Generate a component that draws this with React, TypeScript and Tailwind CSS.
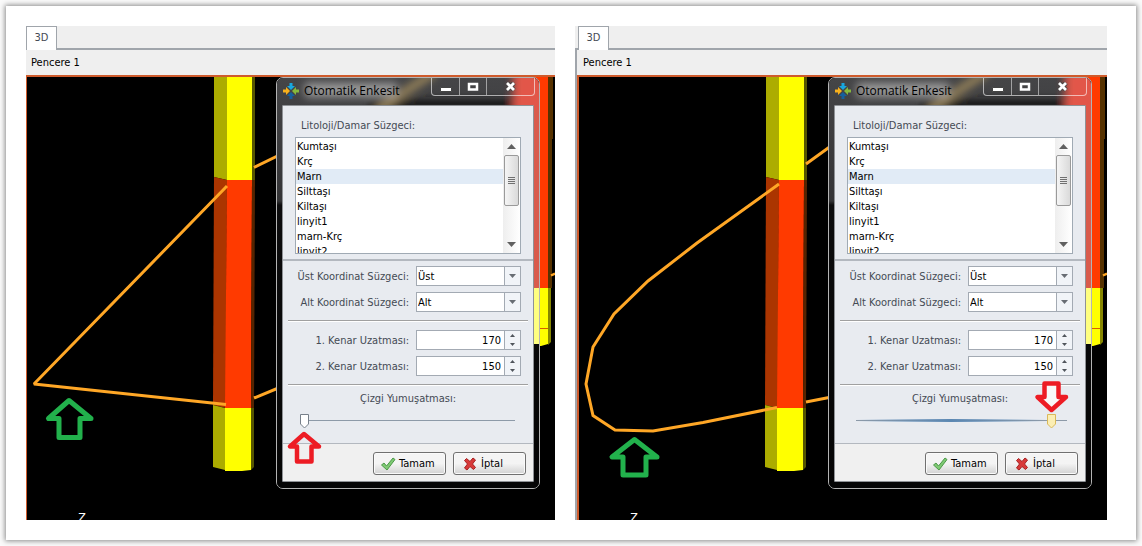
import { useId, useState } from "react";
import type { ReactNode } from "react";

const LITHOLOGIES = ["Kumtaşı", "Krç", "Marn", "Silttaşı", "Kiltaşı", "linyit1", "marn-Krç", "linyit2"];

type Variant = "sharp" | "smooth";

function Section({ variant }: { variant: Variant }) {
  return (
    <svg className="absolute top-0 left-0" width="529" height="443" viewBox="26 77 529 443" aria-hidden="true">
      {/* front borehole column */}
      <path d="M214 77h13v103l-13-3z" fill="#acac00" />
      <path d="M227 77h25v103h-25z" fill="#ffff00" />
      <path d="M252 77h3v103h-3z" fill="#565600" />
      <path d="M214 177l13 3-1 228-13-3z" fill="#ab3500" />
      <path d="M227 180h25l-1 228h-26z" fill="#ff3a00" />
      <path d="M252 180h3l-1 228h-3z" fill="#562400" />
      <path d="M213 405l12 3v62l-12-3z" fill="#acac00" />
      <path d="M225 408h26v62l-9 1h-17z" fill="#ffff00" />
      <path d="M251 408h3v59l-3 3z" fill="#565600" />
      {/* rear borehole column */}
      <path d="M510 77h38v211h-38z" fill="#ff3a00" />
      <path d="M548 77h5v62h-1v149h-4z" fill="#563200" />
      <path d="M510 288h38v56l-7 2h-31z" fill="#ffff00" />
      <path d="M548 288h3v54l-3 3z" fill="#868600" />
      <path d="M540 328.500h8" stroke="#d86000" />
      <path d="M551 275.500l4-2" stroke="#ffa726" strokeWidth="2.500" />
      <g fill="none" stroke="#ffa726" strokeWidth="3">
        {variant === "sharp" ? (
          <>
            <path d="M227 186L34 384L226 404.500" strokeLinejoin="bevel" />
            <path d="M254 167.500L300 145M254 398L300 379" />
          </>
        ) : (
          <>
            <path d="M227 184L145 243L96 281L62 314L41 347L34 384L41 415.500L63 430L101 431L151 422.500L225 407.500" />
            <path d="M254 164L290 138M254 402L300 393" />
          </>
        )}
      </g>
      {variant === "sharp" ? (
        <path d="M69 400.500L48.500 418.500H59V437.500H80V418.500H91Z" fill="none" stroke="#22b14c" strokeWidth="5" strokeLinejoin="round" />
      ) : (
        <path d="M82.500 439.500L60 457H71V475H94V457H105Z" fill="none" stroke="#22b14c" strokeWidth="5" strokeLinejoin="round" />
      )}
      <text x="78" y="522" fill="#ffffff" fontSize="13" fontFamily="Liberation Sans, sans-serif">Z</text>
    </svg>
  );
}

function AppMark() {
  return (
    <svg width="16" height="16" viewBox="0 0 16 16" aria-hidden="true">
      <path d="M6.500 0h3v3h2.500L8 7 4 3h2.500z" fill="#18a8e0" />
      <path d="M6.500 16h3v-3h2.500L8 9 4 13h2.500z" fill="#155f9e" />
      <path d="M0 6.500v3h3v2.500L7 8 3 4v2.500z" fill="#f8b01c" />
      <path d="M16 6.500v3h-3v2.500L9 8l4-4v2.500z" fill="#86b83c" />
    </svg>
  );
}

function Glass() {
  return (
    <svg className="absolute inset-0 h-full w-full" viewBox="0 0 262 410" preserveAspectRatio="none" aria-hidden="true">
      <defs>
        <filter id="soft" x="-20%" y="-20%" width="140%" height="140%">
          <feGaussianBlur stdDeviation="4" />
        </filter>
        <linearGradient id="frame" x1="0" y1="0" x2="0" y2="1">
          <stop offset="0" stopColor="#454547" />
          <stop offset="0.300" stopColor="#343436" />
          <stop offset="0.310" stopColor="#0c0c0d" />
          <stop offset="1" stopColor="#050505" />
        </linearGradient>
      </defs>
      <rect width="262" height="410" fill="url(#frame)" />
      <g filter="url(#soft)">
        <path d="M90 22h170v10H90z" fill="#131313" />
        <path d="M100 32L158-6" stroke="#a08a5c" strokeWidth="7" />
        <path d="M28 5h92v14H28z" fill="#9a9a9a" />
        <path d="M236-8h40v218h-40z" fill="#e2574a" />
        <path d="M255-8h20v218h-20z" fill="#e2574a" />
      </g>
      <path d="M254 32h8v178h-8z" fill="#d95b4c" />
      <path d="M254 210h8v56h-8z" fill="#ffff80" />
    </svg>
  );
}

function Row({ id, label, children }: { id: string; label: string; children: ReactNode }) {
  return (
    <div className="flex h-5 items-center gap-[7px]">
      <label htmlFor={id} className="flex-1 text-right whitespace-nowrap text-[#444a54]">
        {label}
      </label>
      <div className="flex h-5 w-[105px] border border-[#a3aab3] bg-white">{children}</div>
    </div>
  );
}

function Choice({ label, value }: { label: string; value: string }) {
  const id = useId();
  return (
    <Row id={id} label={label}>
      <div className="grid flex-1 grid-cols-[1fr_16px]">
        <select id={id} defaultValue={value} className="col-span-2 col-start-1 row-start-1 appearance-none bg-transparent pl-px text-black outline-none">
          <option>Üst</option>
          <option>Alt</option>
        </select>
        <span className="pointer-events-none col-start-2 row-start-1 flex items-center justify-center border-l border-[#a3aab3] bg-[#f1f4f8]">
          <svg width="7" height="4" viewBox="0 0 7 4" aria-hidden="true">
            <path d="M0 0h7L3.500 4z" fill="#686d74" />
          </svg>
        </span>
      </div>
    </Row>
  );
}

function Amount({ label, initial }: { label: string; initial: number }) {
  const id = useId();
  const [value, setValue] = useState(initial);
  return (
    <Row id={id} label={label}>
      <input
        id={id}
        inputMode="numeric"
        value={value}
        onChange={(e) => setValue(Number(e.target.value) || 0)}
        className="min-w-0 flex-1 bg-transparent pr-[3px] text-right text-black outline-none"
      />
      <span className="flex w-4 flex-col border-l border-[#a3aab3] bg-[#f1f4f8]">
        <button type="button" aria-label="+" onClick={() => setValue(value + 1)} className="flex flex-1 items-center justify-center">
          <svg width="5" height="3" viewBox="0 0 5 3" aria-hidden="true">
            <path d="M0 3h5L2.500 0z" fill="#50555c" />
          </svg>
        </button>
        <button type="button" aria-label="-" onClick={() => setValue(value - 1)} className="flex flex-1 items-center justify-center">
          <svg width="5" height="3" viewBox="0 0 5 3" aria-hidden="true">
            <path d="M0 0h5L2.500 3z" fill="#50555c" />
          </svg>
        </button>
      </span>
    </Row>
  );
}

function Divider() {
  return <div className="mx-[5px] my-2 h-[2px] border-t border-[#a0a0a0] bg-white" />;
}

function LithologyList({ labelId }: { labelId: string }) {
  const [selected, setSelected] = useState("Marn");
  return (
    <div className="mx-3 mt-1 flex h-[117px] border border-[#a0aab4] bg-white">
      <ul role="listbox" aria-labelledby={labelId} className="flex-1 overflow-hidden pt-px text-black">
        {LITHOLOGIES.map((name) => (
          <li
            key={name}
            role="option"
            aria-selected={name === selected}
            onClick={() => setSelected(name)}
            className="h-[15px] pl-px leading-[15px] aria-selected:bg-[#e1ebf6]"
          >
            {name}
          </li>
        ))}
      </ul>
      <div className="flex w-[17px] flex-col items-center bg-gradient-to-r from-[#eeeeee] to-white">
        <span className="flex h-[17px] items-center">
          <svg width="9" height="5" viewBox="0 0 9 5" aria-hidden="true">
            <path d="M0 5h9L4.500 0z" fill="#606060" />
          </svg>
        </span>
        <span className="flex h-[51px] w-[15px] flex-col items-center justify-center gap-px rounded-[2px] border border-[#9a9a9a] bg-gradient-to-r from-[#f5f5f5] to-[#dadada]">
          <i className="h-px w-[7px] bg-[#707070]" />
          <i className="h-px w-[7px] bg-[#707070]" />
          <i className="h-px w-[7px] bg-[#707070]" />
          <i className="h-px w-[7px] bg-[#707070]" />
        </span>
        <span className="mt-auto flex h-[17px] items-center">
          <svg width="9" height="5" viewBox="0 0 9 5" aria-hidden="true">
            <path d="M0 0h9L4.500 5z" fill="#606060" />
          </svg>
        </span>
      </div>
    </div>
  );
}

function Smoothing({ variant }: { variant: Variant }) {
  const id = useId();
  const smooth = variant === "smooth";
  const [value, setValue] = useState(smooth ? 93 : 0);
  return (
    <div className="-mt-[3px] flex flex-col gap-[7px] pb-[14px]">
      <label htmlFor={id} className="self-center text-[#444a54]">
        {"Çizgi Yumuşatması:"}
      </label>
      <div className="relative mr-[14px] ml-[17px] h-4 pt-[7px]">
        <div className="mx-[4px] h-px bg-[#8d9aa8]" />
        {smooth && (
          <div className="absolute top-[6px] left-[4px] h-[3px] w-[190px] bg-gradient-to-r from-transparent via-[#5b87b2] to-transparent" />
        )}
        <div className="absolute top-0 right-[9px] left-0 h-4">
          <svg className="absolute top-0" style={{ left: `${value}%` }} width="9" height="16" viewBox="0 0 9 16" aria-hidden="true">
            <path d="M.5 1.500h8v9.500L4.500 15 .5 11z" fill={smooth ? "#fbeeb4" : "#ffffff"} stroke={smooth ? "#d9b95a" : "#77808a"} />
          </svg>
        </div>
        <input
          id={id}
          type="range"
          min={0}
          max={100}
          value={value}
          onChange={(e) => setValue(Number(e.target.value))}
          className="absolute inset-0 h-4 w-full opacity-0"
        />
      </div>
    </div>
  );
}

function Marker({ variant }: { variant: Variant }) {
  return variant === "sharp" ? (
    <svg className="pointer-events-none absolute top-[350px] left-[9px]" width="37" height="37" viewBox="0 0 37 37" aria-hidden="true">
      <path d="M18 6L4 18.500H11V33.500H25.500V18.500H33Z" fill="none" stroke="#ed1c24" strokeWidth="4.500" strokeLinejoin="round" />
    </svg>
  ) : (
    <svg className="pointer-events-none absolute top-[302px] left-[205px]" width="35" height="34" viewBox="0 0 35 34" aria-hidden="true">
      <path d="M17.500 30L3.500 17H10.500V3.500H24.500V17H32Z" fill="#f8f8f8" stroke="#ed1c24" strokeWidth="4.500" strokeLinejoin="round" />
    </svg>
  );
}

const ACTION =
  "flex h-[23px] w-[73px] items-center gap-[3px] rounded-[3px] border border-[#707070] bg-gradient-to-b from-[#f4f4f4] from-50% to-[#d2d2d2] text-black shadow-[inset_0_0_0_1px_#fafafa]";

function Dialog({ variant }: { variant: Variant }) {
  const labelId = useId();
  return (
    <section
      role="dialog"
      aria-label="Otomatik Enkesit"
      className="absolute top-0 left-[250px] w-[264px] rounded-[7px] border border-[#b4b4b4] bg-black text-[11px] leading-[15px]"
    >
      <div className="absolute inset-0 overflow-hidden rounded-[6px]">
        <Glass />
      </div>
      <header className="relative flex h-[27px] items-start pl-[6px]">
        <div className="flex flex-1 items-center gap-[5px] pt-1">
          <AppMark />
          <h2 className="font-['Open_Sans',sans-serif] text-[12px] leading-[18px] text-black">
            Otomatik Enkesit
          </h2>
        </div>
        <div className="mr-1 flex h-[18px] rounded-b-[4px] border border-t-0 border-white/60 text-white">
          <button type="button" aria-label="Simge durumuna küçült" className="flex w-7 items-center justify-center border-r border-white/50">
            <svg width="12" height="12" viewBox="0 0 12 12" aria-hidden="true">
              <path d="M.5 6.500h11v4H.5z" fill="#fff" stroke="#444" />
            </svg>
          </button>
          <button type="button" aria-label="Ekranı kapla" className="flex w-[27px] items-center justify-center border-r border-white/50">
            <svg width="12" height="10" viewBox="0 0 12 10" aria-hidden="true">
              <path d="M2 2h8v5.500H2z" fill="none" stroke="#fff" strokeWidth="2.500" />
            </svg>
          </button>
          <button type="button" aria-label="Kapat" className="flex w-[47px] items-center justify-center">
            <svg width="12" height="10" viewBox="0 0 12 10" aria-hidden="true">
              <path d="M2 1l7 7M9 1L2 8" stroke="#444" strokeWidth="4.500" />
              <path d="M2 1l7 7M9 1L2 8" stroke="#fff" strokeWidth="2.800" />
            </svg>
          </button>
        </div>
      </header>
      <div className="relative mx-[5px] mb-[6px] rounded-[1px] border border-[#8f9296] bg-[#f0f0f0]">
        <div className="border-b-2 border-[#b3b8bf] bg-[#e8ebf0] pt-3 pb-[5px]">
          <p id={labelId} className="pl-[18px] text-[#444a54]">
            Litoloji/Damar Süzgeci:
          </p>
          <LithologyList labelId={labelId} />
        </div>
        <div className="border-b border-[#b3b8bf] bg-[#e8ebf0] pt-[5px]">
          <div className="mx-3 flex flex-col gap-[6px]">
            <Choice label="Üst Koordinat Süzgeci:" value="Üst" />
            <Choice label="Alt Koordinat Süzgeci:" value="Alt" />
          </div>
          <Divider />
          <div className="mx-3 flex flex-col gap-[6px]">
            <Amount label="1. Kenar Uzatması:" initial={170} />
            <Amount label="2. Kenar Uzatması:" initial={150} />
          </div>
          <Divider />
          <Smoothing variant={variant} />
        </div>
        <footer className="flex justify-end gap-[7px] pt-2 pr-[7px] pb-[6px]">
          <button type="button" className={`${ACTION} pl-[6px]`}>
            <svg width="16" height="16" viewBox="0 0 16 16" aria-hidden="true">
              <path d="M1.500 9l2.500-2 2.500 3L13 2l2 1.500L7 14z" fill="#7fc974" stroke="#4c9a48" />
            </svg>
            Tamam
          </button>
          <button type="button" className={`${ACTION} pl-2`}>
            <svg width="16" height="16" viewBox="0 0 16 16" aria-hidden="true">
              <path d="M2.500 4.500l2-2L8 5.500l3-3.500 2.500 2L10.500 8l3 3.500-2 2L8 10.500 5 14l-2.500-2L5.500 8z" fill="#d83a3a" stroke="#a82020" />
            </svg>
            İptal
          </button>
        </footer>
      </div>
      <Marker variant={variant} />
    </section>
  );
}

function Pane({ variant }: { variant: Variant }) {
  const smooth = variant === "smooth";
  return (
    <article className="flex min-w-0 flex-col bg-[#efefef]">
      <nav className={smooth ? "flex h-6 border-b-2 border-[#a0a5ab] pl-[3px]" : "flex h-6 border-b-2 border-[#a0a5ab]"}>
        <button type="button" className="h-6 w-[31px] border border-b-0 border-[#a0a5ab] bg-white text-[11px] text-[#444a54]">
          3D
        </button>
      </nav>
      <div className={smooth ? "border-l-2 border-[#a0a5ab]" : ""}>
        <h1 className={smooth ? "h-[25px] pl-[6px] text-[11px] leading-[25px] text-black" : "h-[25px] pl-[5px] text-[11px] leading-[25px] text-black"}>
          Pencere 1
        </h1>
        <div className={smooth ? "border-t-2 border-l border-[#cf5b2c]" : "border-t-2 border-[#cf5b2c]"}>
          <div className="relative h-[443px] overflow-hidden bg-black">
            <Section variant={variant} />
            <div className="absolute inset-y-0 left-0 w-px bg-[#cf5b2c]" />
            <Dialog variant={variant} />
          </div>
        </div>
      </div>
    </article>
  );
}

export default function App() {
  return (
    <div className="bg-[#fafafa] p-[6px] font-['DejaVu_Sans_Condensed','DejaVu_Sans',sans-serif]">
      <main className="grid grid-cols-[529fr_532fr] gap-5 bg-white py-5 pr-[29px] pl-5 shadow-[0_0_5px_1px_rgba(0,0,0,0.45)]">
        <Pane variant="sharp" />
        <Pane variant="smooth" />
      </main>
    </div>
  );
}
